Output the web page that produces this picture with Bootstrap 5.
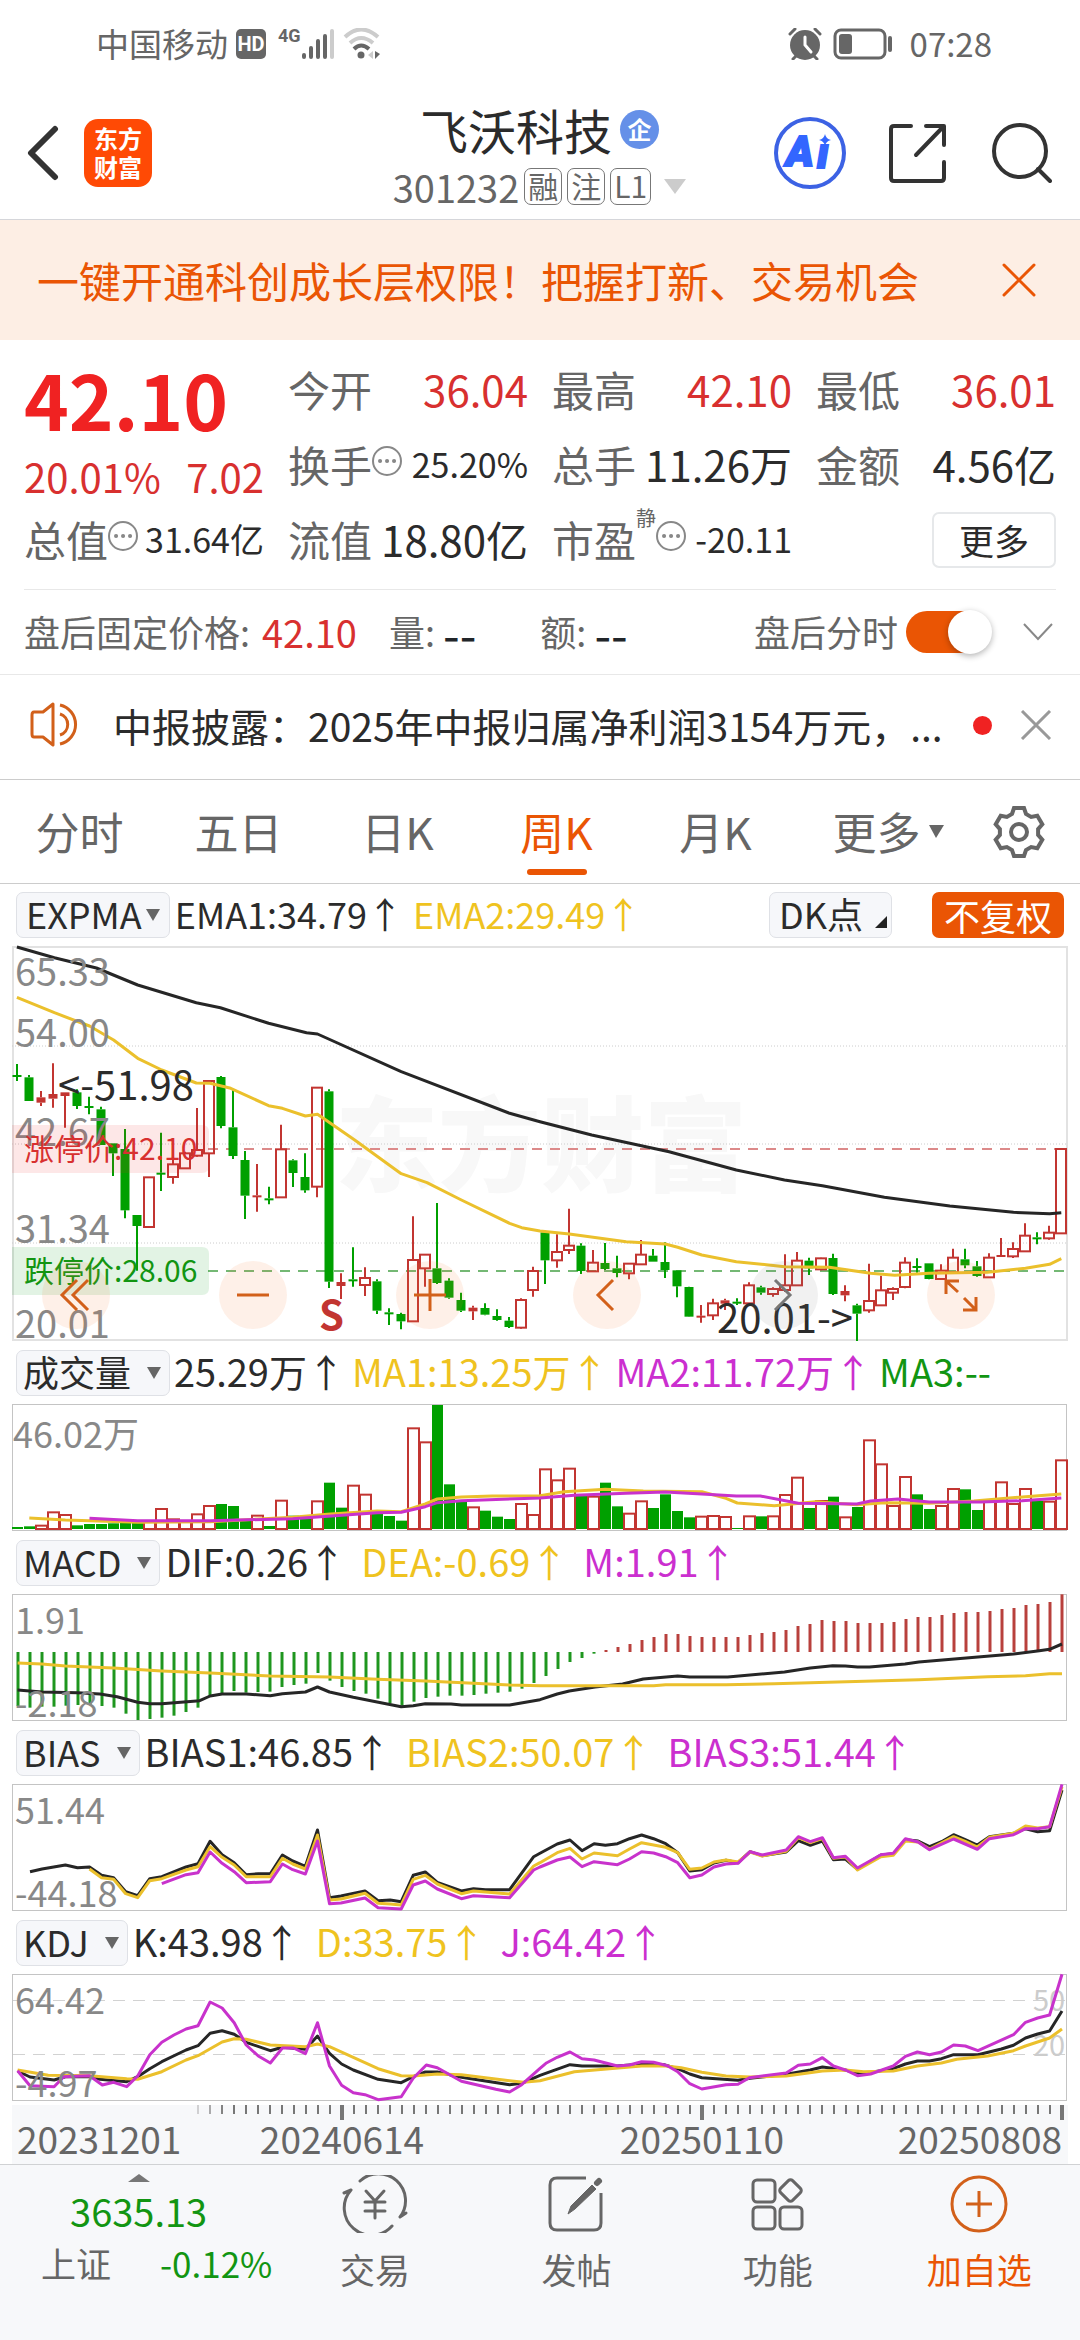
<!DOCTYPE html>
<html lang="zh-CN">
<head>
<meta charset="utf-8">
<meta name="viewport" content="width=device-width, initial-scale=1">
<title>飞沃科技 301232</title>
<link rel="stylesheet" href="https://cdn.jsdelivr.net/npm/bootstrap@5.3.0/dist/css/bootstrap.min.css">
<style>
:root{--ink:#2b2b2b;--soft:#666;--up:#d8302f;--down:#129512;--brand:#ea5504;--gold:#efc31f;--pink:#cb2fcf;--pane:#f7f8fa}
body{font-family:"Noto Sans CJK SC","Noto Sans",sans-serif;color:var(--ink);background:#fff;font-size:36px;line-height:1.3}
button{font-family:inherit;color:inherit;background:none;border:0;padding:0}
a{color:inherit;text-decoration:none}
svg{display:block;flex:none}
.c-soft{color:var(--soft)}.c-up{color:var(--up)}.c-down{color:var(--down)}.c-brand{color:var(--brand)}.c-gold{color:var(--gold)}.c-pink{color:var(--pink)}
.statusbar{height:87px;padding:0 88px 0 96px;font-size:33px;color:var(--soft)}
.hd-tag{width:30px;height:30px;border-radius:5px;background:#666;color:#fff;font:bold 20px/30px "Roboto",sans-serif;text-align:center}
.net-tag{font:bold 18px/16px "Roboto",sans-serif;align-self:flex-start}
.topbar{height:133px;border-bottom:1px solid #d5d6da;padding:0 28px 0 27px}
.topbar-side{flex:1 1 0}
.logo{width:68px;height:68px;border-radius:14px;background:#ff4a05;color:#fff;font-weight:700;font-size:24px;line-height:29px;margin-left:25px;padding-top:4px;text-align:center}
.stock-name{font-size:48px;line-height:56px;font-weight:400;margin:0}
.qi{width:39px;height:39px;border-radius:50%;background:#6590e8;color:#fff;font-weight:700;font-size:24px;line-height:37px;text-align:center}
.code-line{font-size:38px;line-height:37px;margin-top:11px;gap:5px}
.tagbox{border:1px solid #777;border-radius:7px;height:37px;font-size:30px;line-height:33px;padding:0 3px}
.share-btn{margin:0 45px 0 43px}
.notice{height:120px;background:#fdeee4;padding:0 40px 0 37px;font-size:42px}
.quote{padding:12px 24px;display:grid;grid-template-columns:repeat(4,1fr);column-gap:24px;grid-auto-rows:75px}
.price-cell{grid-row:span 2}
.last-price{font-size:76px;line-height:92px;font-weight:700;color:#f02222}
.change-line{font-size:40px;line-height:52px;padding-top:6px}
.stat{font-size:42px;white-space:nowrap}
.stat dt{font-weight:400;color:var(--soft)}
.stat dd{margin:0 0 0 auto}
.stat .sm-val{font-size:34px}
.static-mark{font-size:20px;line-height:24px;align-self:flex-start;color:var(--soft)}
.more-btn{border:2px solid #e6e8ea;border-radius:7px;width:124px;height:56px;font-size:35px;line-height:48px;margin-left:auto}
.after-row{height:86px;margin:0;padding:0 27px 0 24px;border-bottom:1px solid #e8e8e8;position:relative}
.after-row::before{content:"";position:absolute;left:24px;right:24px;top:0;border-top:1px solid #e8e8e8}
.after-row .v{font-size:38px}
.after-row .dash{font-size:48px;line-height:48px}
.switch{appearance:none;width:85px;height:42px;border-radius:21px;background:var(--brand);position:relative;margin:0;flex:none}
.switch::before{content:"";position:absolute;right:-1px;top:-1px;width:44px;height:44px;border-radius:50%;background:#fff;box-shadow:0 2px 6px rgba(0,0,0,.3)}
.news-row{height:105px;border-bottom:1px solid #ccc;padding:0 28px 4px 30px;font-size:39px}
.news-link{margin-left:33px;white-space:nowrap}
.red-dot{width:19px;height:19px;border-radius:50%;background:#f02222;flex:none}
.period{height:104px;border-bottom:1px solid #ccc;font-size:44px;color:var(--soft)}
.period>*{flex:159 1 0;position:relative;height:100%}
.period>.wide-tab{flex-grow:186}.period>.gear-tab{flex-grow:99}
.period .on{color:var(--brand)}
.period .on::after{content:"";position:absolute;left:50%;bottom:8px;width:60px;height:6px;border-radius:3px;margin-left:-30px;background:var(--brand)}
.legend{height:63px;padding:0 16px;font-size:38px;line-height:46px;white-space:nowrap}
.legend.first{height:62px;font-size:36px}
.pick{border:1px solid #dfe1e6;border-radius:7px;background:#f6f7fa;height:46px;padding:0 8px 4px 6px;font-size:36px;line-height:40px;display:flex;align-items:center;gap:16px;color:var(--ink)}
.pick svg{margin-top:4px}
.first .pick{gap:4px;padding:0 9px 4px 9px}
.vals{display:flex;gap:15px;padding:0 0 4px 5px}
.first .vals{gap:10px}
.vals.tight{gap:7px;padding-left:4px}
.adj{background:var(--brand);color:#fff;border-radius:7px;height:46px;width:132px;font-size:36px;line-height:42px;margin-left:40px}
.pane{margin:0 12px;position:relative}
.pane svg{width:100%;height:auto;overflow:visible}
.pane text{font-family:"Noto Sans CJK SC",sans-serif;font-size:36px;fill:#888}
.pane .t38{font-size:38px}
.pane .date{font-size:37px;fill:#666}
.zoombar{position:absolute;left:30px;right:73px;bottom:12px}
.round-btn{width:68px;height:68px;border-radius:50%;background:rgba(250,120,50,.11);display:flex;align-items:center;justify-content:center}
.round-btn.off{background:rgba(120,120,120,.1)}
.round-btn svg{width:34px;height:34px}
.bottombar{border-top:1px solid #d0d2d4;background:var(--pane);min-height:176px;color:var(--soft)}
.index-cell{flex:0 0 25.4%;padding:9px 2px 0 41px}
.index-cell .lvl{font-size:38px;line-height:41px;padding:0 36px 0 0}
.index-cell .sub{font-size:35px;line-height:48px}
.nav-cell{flex:1 1 0;padding-top:10px;font-size:35px;line-height:48px}
.nav-cell svg{margin-bottom:12px}
</style>
<script src="https://cdn.jsdelivr.net/npm/bootstrap@5.3.0/dist/js/bootstrap.bundle.min.js"></script>
</head>
<body>
<div class="statusbar d-flex align-items-center">
  <span>中国移动</span>
  <span class="hd-tag ms-2">HD</span>
  <div class="d-flex align-items-end" style="height:32px">
    <span class="net-tag ms-2 ps-1">4G</span>
    <svg width="34" height="32" viewBox="0 0 34 32" stroke="#666" stroke-width="4" stroke-linecap="round"><path d="M3 29v-2M10 29v-9M17 29v-16M24 29V8"/><path d="M31 29V3" stroke="#ccc"/></svg>
  </div>
  <svg class="ms-2" width="38" height="32" viewBox="0 0 38 32" fill="none" stroke-width="4"><path d="M2 9Q18-6 35 9M7 15Q18 5 30 15" stroke="#ccc"/><path d="M11 21Q18 14 26 21" stroke="#666"/><circle cx="18" cy="27" r="3.500" fill="#666"/><path d="M30 23v8l-5-4z" fill="#ccc"/><path d="M32 23l5 3-5 5z" fill="#666"/></svg>
  <svg class="ms-auto" width="34" height="32" viewBox="0 0 34 32"><circle cx="17" cy="17" r="15" fill="#666"/><path d="M2 6l5-5M32 6l-5-5M5 31l4-4M29 31l-4-4" stroke="#666" stroke-width="3" stroke-linecap="round"/><path d="M17 9v8l6 7" fill="none" stroke="#fff" stroke-width="3" stroke-linecap="round"/></svg>
  <svg class="ms-2 me-3" width="64" height="32" viewBox="0 0 64 32"><rect x="5" y="2" width="50" height="28" rx="6" fill="none" stroke="#666" stroke-width="3"/><rect x="9" y="6" width="13" height="20" rx="3" fill="#666"/><path d="M60 10v12" stroke="#666" stroke-width="4" stroke-linecap="round"/></svg>
  <span>07:28</span>
</div>

<header class="topbar d-flex align-items-center">
  <div class="topbar-side d-flex align-items-center">
    <button type="button" aria-label="返回"><svg width="32" height="56" viewBox="0 0 32 56" fill="none" stroke="#333" stroke-width="6" stroke-linecap="round" stroke-linejoin="round"><path d="M28 4L4 28l24 24"/></svg></button>
    <div class="logo">东方<br>财富</div>
  </div>
  <div>
    <div class="d-flex justify-content-center align-items-center gap-2"><h1 class="stock-name">飞沃科技</h1><span class="qi">企</span></div>
    <div class="code-line d-flex align-items-center c-soft"><span>301232</span><span class="tagbox">融</span><span class="tagbox">注</span><span class="tagbox">L1</span><svg class="ms-2" width="22" height="15" viewBox="0 0 22 15"><path d="M0 0h22L11 15z" fill="#ccc"/></svg></div>
  </div>
  <div class="topbar-side d-flex align-items-center justify-content-end">
    <button type="button" aria-label="Ai"><svg width="72" height="72" viewBox="0 0 72 72"><circle cx="36" cy="36" r="34" fill="none" stroke="#3c62e4" stroke-width="4"/><g fill="#3366ff" stroke="#3366ff" stroke-width="2" font-family="Roboto,sans-serif" font-weight="900" font-style="italic" font-size="42"><text x="12" y="49">A</text><text x="43" y="51">ı</text></g><path d="M51 17q1 5 6 6-5 1-6 6-1-5-6-6 5-1 6-6z" fill="#3366ff"/></svg></button>
    <button type="button" class="share-btn" aria-label="分享"><svg width="58" height="60" viewBox="0 0 58 60" fill="none" stroke="#333" stroke-width="4" stroke-linecap="round" stroke-linejoin="round"><path d="M22 3H5Q2 3 2 6V55Q2 58 5 58H52Q55 58 55 55V39M37 3H55V22M54 4L27 32"/></svg></button>
    <button type="button" aria-label="搜索"><svg width="60" height="60" viewBox="0 0 60 60" fill="none" stroke="#333" stroke-width="4" stroke-linecap="round"><circle cx="28" cy="28" r="26"/><path d="M46 46l12 12"/></svg></button>
  </div>
</header>

<div class="notice d-flex align-items-center justify-content-between c-brand">
  <a href="#">一键开通科创成长层权限！把握打新、交易机会</a>
  <button type="button" aria-label="关闭"><svg width="40" height="34" viewBox="0 0 40 34" stroke="#ea5504" stroke-width="3" stroke-linecap="round"><path d="M4 2l30 30M34 2L4 32"/></svg></button>
</div>

<dl class="quote m-0">
  <div class="price-cell"><div class="last-price">42.10</div><div class="change-line c-up d-flex justify-content-between"><span>20.01%</span><span>7.02</span></div></div>
  <div class="stat d-flex align-items-center"><dt>今开</dt><dd class="c-up">36.04</dd></div>
  <div class="stat d-flex align-items-center"><dt>最高</dt><dd class="c-up">42.10</dd></div>
  <div class="stat d-flex align-items-center"><dt>最低</dt><dd class="c-up">36.01</dd></div>
  <div class="stat d-flex align-items-center"><dt>换手</dt><svg width="30" height="40" viewBox="0 0 30 40"><use href="#dots"/></svg><dd class="sm-val">25.20%</dd></div>
  <div class="stat d-flex align-items-center"><dt>总手</dt><dd>11.26万</dd></div>
  <div class="stat d-flex align-items-center"><dt>金额</dt><dd>4.56亿</dd></div>
  <div class="stat d-flex align-items-center"><dt>总值</dt><svg width="30" height="40" viewBox="0 0 30 40"><g id="dots"><circle cx="15" cy="16" r="14" fill="none" stroke="#888" stroke-width="2"/><path d="M8 16h.1M15 16h.1M22 16h.1" stroke="#888" stroke-width="4" stroke-linecap="round"/></g></svg><dd class="sm-val">31.64亿</dd></div>
  <div class="stat d-flex align-items-center"><dt>流值</dt><dd>18.80亿</dd></div>
  <div class="stat d-flex align-items-center"><dt>市盈</dt><span class="static-mark pt-1">静</span><svg width="30" height="40" viewBox="0 0 30 40"><use href="#dots"/></svg><dd class="sm-val">-20.11</dd></div>
  <div class="d-flex align-items-center"><button type="button" class="more-btn">更多</button></div>
</dl>

<div class="after-row d-flex align-items-center c-soft">
  <span>盘后固定价格:</span><span class="v c-up ms-2 ps-1">42.10</span>
  <span class="ms-4 ps-2">量:&nbsp;</span><span class="dash text-dark">--</span>
  <span class="ms-5 ps-3">额:&nbsp;</span><span class="dash text-dark">--</span>
  <label for="after" class="ms-auto me-2">盘后分时</label><input class="switch" type="checkbox" id="after" checked>
  <button type="button" aria-label="展开" class="ms-4 ps-2"><svg width="30" height="18" viewBox="0 0 30 18" fill="none" stroke="#888" stroke-width="2"><path d="M1 1l14 15L29 1"/></svg></button>
</div>

<div class="news-row d-flex align-items-center">
  <svg width="50" height="46" viewBox="0 0 50 46" fill="none" stroke="#d2601a" stroke-width="3"><path d="M23 2L13 10H4Q2 10 2 13V32Q2 35 4 35H13L23 43z" stroke-linejoin="round"/><path d="M30 12a11 11 0 0 1 0 21M30 3a20 20 0 0 1 0 39"/></svg>
  <a href="#" class="news-link me-auto">中报披露：2025年中报归属净利润3154万元，...</a>
  <span class="red-dot"></span>
  <button type="button" aria-label="关闭" class="ms-4"><svg width="36" height="30" viewBox="0 0 36 30" stroke="#999" stroke-width="3"><path d="M6 1l28 28M34 1L6 29"/></svg></button>
</div>

<nav class="period d-flex align-items-center text-center">
  <button type="button">分时</button><button type="button">五日</button><button type="button">日K</button><button type="button" class="on">周K</button><button type="button">月K</button>
  <button type="button" class="wide-tab d-flex align-items-center justify-content-center">更多<svg class="ms-2" width="15" height="13" viewBox="0 0 15 13"><path d="M0 0h15L7 13z" fill="#666"/></svg></button>
  <button type="button" class="gear-tab" aria-label="设置"><svg class="ms-2 ps-1" width="56" height="54" viewBox="-26 -27 52 54" fill="none" stroke="#666" stroke-width="4"><path d="M-7-18L-5-24H5L7-18L12.100-15.100L18.300-16.300L23.300-7.700L19.100-2.900V2.900L23.300 7.700L18.300 16.300L12.100 15.100L7 18L5 24H-5L-7 18L-12.100 15.100L-18.300 16.300L-23.300 7.700L-19.100 2.900V-2.900L-23.300-7.700L-18.300-16.300L-12.100-15.100z"/><circle r="8"/></svg></button>
</nav>

<div class="legend first d-flex align-items-center">
  <button type="button" class="pick">EXPMA<svg width="14" height="12" viewBox="0 0 14 12"><path d="M0 0h14L7 12z" fill="#666"/></svg></button>
  <div class="vals"><span>EMA1:34.79↑</span><span class="c-gold">EMA2:29.49↑</span></div>
  <button type="button" class="pick ms-auto pe-1">DK点<svg class="ms-2" width="12" height="26" viewBox="0 0 12 26"><path d="M12 14v12H0z" fill="#222"/></svg></button>
  <button type="button" class="adj">不复权</button>
</div>
<div class="pane">
  <svg id="kline" viewBox="12 946 1056 395">
    <text x="335" y="1184" style="font-size:103px;font-weight:900;fill:#f8f8f8">东方财富</text>
    <rect x="13" y="947" width="1054" height="393" fill="none" stroke="#e2e2e2" stroke-width="2"/>
    <path d="M12 1046H1067M12 1144H1067M12 1243H1067" stroke="#ccc" stroke-dasharray="1 2"/>
    <path d="M208 1149H1060" stroke="#dc8a8a" stroke-width="2" stroke-dasharray="10 8"/>
    <path d="M208 1271H1066" stroke="#74b874" stroke-width="2" stroke-dasharray="10 8"/>
    <g class="plot"></g>
    <text class="t38" x="15" y="986">65.33</text><text class="t38" x="15" y="1047">54.00</text><text class="t38" x="15" y="1146">42.67</text><text class="t38" x="15" y="1243">31.34</text><text class="t38" x="15" y="1338">20.01</text>
    <path d="M12 1125H202q7 0 7 7v34q0 7-7 7H12z" fill="#f02020" fill-opacity=".11"/>
    <path d="M12 1247H202q7 0 7 7v34q0 7-7 7H12z" fill="#10a020" fill-opacity=".12"/>
    <text x="24" y="1160" style="font-size:30px;fill:#d8302f">涨停价:42.10</text>
    <text x="24" y="1282" style="font-size:30px;fill:#129512">跌停价:28.06</text>
    <text x="58" y="1100" style="font-size:40px;fill:#2b2b2b">&lt;-51.98</text>
    <text x="717" y="1333" style="font-size:40px;fill:#2b2b2b">20.01-&gt;</text>
    <text x="319" y="1330" style="font-size:40px;font-weight:700;fill:#c23531">S</text>
  </svg>
  <div class="zoombar d-flex justify-content-between">
    <button type="button" class="round-btn" aria-label="最左"><svg viewBox="0 0 34 34" fill="none" stroke="#d2601a" stroke-width="3"><path d="M18 2L3 17l15 15M29 2L14 17l15 15"/></svg></button>
    <button type="button" class="round-btn" aria-label="缩小"><svg viewBox="0 0 34 34" stroke="#d2601a" stroke-width="3"><path d="M1 17h32"/></svg></button>
    <button type="button" class="round-btn" aria-label="放大"><svg viewBox="0 0 34 34" stroke="#d2601a" stroke-width="3"><path d="M1 17h32M17 1v32"/></svg></button>
    <button type="button" class="round-btn" aria-label="左移"><svg viewBox="0 0 34 34" fill="none" stroke="#d2601a" stroke-width="3"><path d="M23 2L8 17l15 15"/></svg></button>
    <button type="button" class="round-btn off" aria-label="右移"><svg viewBox="0 0 34 34" fill="none" stroke="#777" stroke-width="3"><path d="M8 2l15 15L8 32"/></svg></button>
    <button type="button" class="round-btn" aria-label="全屏"><svg viewBox="0 0 34 34" fill="none" stroke="#d2601a" stroke-width="3"><path d="M2 16V3H15M2 3L14 14M32 19V32H19M32 32L20 20"/></svg></button>
  </div>
</div>

<div class="legend d-flex align-items-center">
  <button type="button" class="pick">成交量<svg width="14" height="12" viewBox="0 0 14 12"><path d="M0 0h14L7 12z" fill="#666"/></svg></button>
  <div class="vals tight"><span>25.29万↑</span><span class="c-gold">MA1:13.25万↑</span><span class="c-pink">MA2:11.72万↑</span><span class="c-down">MA3:--</span></div>
</div>
<div class="pane"><svg id="vol" viewBox="12 1404 1056 127"><rect x="12.500" y="1404.500" width="1054" height="126" fill="none" stroke="#c4c4c4"/><g class="plot"></g><text x="13" y="1448">46.02万</text></svg></div>

<div class="legend d-flex align-items-center">
  <button type="button" class="pick">MACD<svg width="14" height="12" viewBox="0 0 14 12"><path d="M0 0h14L7 12z" fill="#666"/></svg></button>
  <div class="vals"><span>DIF:0.26↑</span><span class="c-gold">DEA:-0.69↑</span><span class="c-pink">M:1.91↑</span></div>
</div>
<div class="pane"><svg id="macd" viewBox="12 1594 1056 127"><rect x="12.500" y="1594.500" width="1054" height="126" fill="none" stroke="#c4c4c4"/><g class="plot"></g><text x="15" y="1634">1.91</text><text x="15" y="1717">-2.18</text></svg></div>

<div class="legend d-flex align-items-center">
  <button type="button" class="pick">BIAS<svg width="14" height="12" viewBox="0 0 14 12"><path d="M0 0h14L7 12z" fill="#666"/></svg></button>
  <div class="vals"><span>BIAS1:46.85↑</span><span class="c-gold">BIAS2:50.07↑</span><span class="c-pink">BIAS3:51.44↑</span></div>
</div>
<div class="pane"><svg id="bias" viewBox="12 1784 1056 127"><rect x="12.500" y="1784.500" width="1054" height="126" fill="none" stroke="#c4c4c4"/><g class="plot"></g><text x="15" y="1824">51.44</text><text x="15" y="1907">-44.18</text></svg></div>

<div class="legend d-flex align-items-center">
  <button type="button" class="pick">KDJ<svg width="14" height="12" viewBox="0 0 14 12"><path d="M0 0h14L7 12z" fill="#666"/></svg></button>
  <div class="vals"><span>K:43.98↑</span><span class="c-gold">D:33.75↑</span><span class="c-pink">J:64.42↑</span></div>
</div>
<div class="pane"><svg id="kdj" viewBox="12 1974 1056 127"><rect x="12.500" y="1974.500" width="1054" height="126" fill="none" stroke="#c4c4c4"/><path d="M13 2000.500H1066M13 2054.500H1066" stroke="#d2d2d2" stroke-dasharray="12 8"/><text x="1033" y="2011" style="font-size:29px;fill:#ccc">50</text><text x="1033" y="2056" style="font-size:29px;fill:#ccc">20</text><g class="plot"></g><text x="15" y="2014">64.42</text><text x="15" y="2097">-4.97</text></svg></div>
<div class="pane pt-1"><svg id="axis" viewBox="12 2105 1056 59"><rect x="12" y="2105" width="1056" height="59" fill="#f7f8fa"/><g class="plot"></g>
  <text class="date" x="17" y="2154">20231201</text><text class="date" x="342" y="2154" text-anchor="middle">20240614</text><text class="date" x="702" y="2154" text-anchor="middle">20250110</text><text class="date" x="1062" y="2154" text-anchor="end">20250808</text></svg></div>

<footer class="bottombar d-flex">
  <a href="#" class="index-cell c-down">
    <div class="lvl text-center"><svg class="mx-auto mb-2" width="22" height="8" viewBox="0 0 22 8"><path d="M0 8L11 0l11 8z" fill="#777"/></svg>3635.13</div>
    <div class="sub d-flex justify-content-between pt-2"><span class="c-soft">上证</span><span>-0.12%</span></div>
  </a>
  <a href="#" class="nav-cell d-flex flex-column align-items-center"><svg width="66" height="58" viewBox="0 0 66 58" fill="none" stroke="#666" stroke-width="3" stroke-linecap="round" stroke-linejoin="round"><path d="M18 6A27 27 0 0 1 58 42L64 38M50 51A27 27 0 0 1 9 15L2 18"/><path d="M24 16l9 10 9-10M33 26v17M23 27h20M23 36h20"/></svg>交易</a>
  <a href="#" class="nav-cell d-flex flex-column align-items-center"><svg width="56" height="58" viewBox="0 0 56 58" fill="none" stroke="#666" stroke-width="3"><path d="M38 3H9Q2 3 2 10V48Q2 55 9 55H46Q53 55 53 48V18"/><path d="M20 39L23 31 44 10 48 14 27 34z" fill="#666" stroke-width="1"/><path d="M49 8l2-2" stroke-width="6" stroke-linecap="round"/></svg>发帖</a>
  <a href="#" class="nav-cell d-flex flex-column align-items-center"><svg width="54" height="58" viewBox="0 0 54 58" fill="none" stroke="#666" stroke-width="3"><rect x="2" y="5" width="22" height="22" rx="4"/><rect x="2" y="32" width="22" height="22" rx="4"/><rect x="29" y="32" width="22" height="22" rx="4"/><rect x="31" y="7" width="17" height="17" rx="3" transform="rotate(45 39.500 15.500)"/></svg>功能</a>
  <a href="#" class="nav-cell d-flex flex-column align-items-center c-brand"><svg width="58" height="58" viewBox="0 0 58 58" fill="none" stroke="#d2601a" stroke-width="3"><circle cx="29" cy="29" r="27"/><path d="M16 29h26M29 16v26"/></svg>加自选</a>
</footer>

<script>
const RED='#c23531', GREEN='#00a000', INK='#262626', GOLD='#ebc02c', PINK='#c832cc';
const NS='http://www.w3.org/2000/svg';
const plot=id=>document.querySelector('#'+id+' .plot');
function add(g,tag,attrs){const e=document.createElementNS(NS,tag);for(const k in attrs)e.setAttribute(k,attrs[k]);g.appendChild(e);}
// Levels are stored in thirds of a unit below each pane's base line; abscissae on the plot grid of 2.904 steps per unit.
const GX=2.904;
function curve(id,base,color,left,right){
  const pts=[];
  for(let i=0;i<left.length;i+=2)pts.push((left[i]/GX).toFixed(1)+','+(base+left[i+1]/3).toFixed(1));
  for(let i=0;i<right.length;i+=2)pts.push((540+right[i]/GX).toFixed(1)+','+(base+right[i+1]/3).toFixed(1));
  add(plot(id),'polyline',{points:pts.join(' '),fill:'none',stroke:color,'stroke-width':3,'stroke-linejoin':'round'});
}
// colour (g/r hollow/f filled red), high, body top, body bottom, low
const K=`g-48,-15,-11,3 g-15,-8,63,63 f33,52,68,78 f-50,42,56,83 f37,37,48,143 g28,37,78,87 g50,78,82,103 g80,88,195,195 g190,190,220,288 g147,207,391,415 g405,405,438,572 r292,292,441,441 g158,278,282,333 r205,253,291,311 r215,220,265,265 r84,210,227,230 r3,3,220,291 g-12,-9,138,145 g30,142,228,237 g213,240,347,417 f252,346,350,395 g320,355,359,373 r134,208,352,352 g238,241,279,321 g220,291,331,338 r23,23,320,352 g28,34,605,624 f580,606,618,657 g502,598,602,620 r562,594,615,648 g598,604,692,702 g685,697,700,735 g698,702,724,748 r409,540,724,724 r524,524,565,620 g369,565,609,612 g595,602,653,656 g638,660,692,696 f677,683,694,720 g670,684,704,706 g688,708,720,722 g711,722,741,744 r655,660,743,746 r560,573,630,650 g452,457,541,612 r463,516,541,563 r386,497,510,522 g490,497,573,582 r510,548,574,574 g489,549,567,570 g527,565,579,592 r550,551,580,598 r480,524,553,553 g507,527,545,545 g487,546,570,594 g571,571,619,652 g620,621,710,711 f675,707,711,728 r656,670,706,720 f656,661,671,690 g655,665,670,675 r607,616,670,670 g617,622,638,644 r622,627,642,650 r523,616,630,636 r516,542,616,618 g533,542,565,585 r533,535,568,571 g521,534,642,645 f616,633,646,664 g671,676,701,783 r551,663,691,698 r587,631,676,678 r622,627,638,660 r532,548,621,625 g535,558,562,578 g550,550,597,598 r553,572,597,600 r506,533,577,578 g506,538,556,565 g543,559,588,590 r520,533,592,594 f474,525,529,530 r487,507,529,534 r430,467,514,516 g457,472,476,493 r437,458,475,479 r205,207,460,462`.split(' ');
K.forEach((s,i)=>{
  const t=s[0],[h,a,b,l]=s.slice(1).split(',').map(v=>1080+v/3),x=17+12*i,c=t=='g'?GREEN:RED,g=plot('kline');
  add(g,'path',{d:`M${x} ${h}V${a}M${x} ${b}V${l}`,stroke:c,'stroke-width':2});
  if(t=='r')add(g,'rect',{x:x-5,y:a,width:10,height:Math.max(2,b-a),fill:'none',stroke:c,'stroke-width':2});
  else add(g,'rect',{x:x-4.5,y:a,width:9,height:Math.max(2,b-a),fill:c});
});
curve('kline',780,INK,[49,501,158,533,280,564,400,615,570,668,640,683,780,730,890,758,922,762,1165,875,1480,1000],[0,1025,150,1065,375,1115,570,1170,710,1200,820,1217,1000,1252,1190,1278,1375,1297,1480,1301,1514,1298]);
curve('kline',780,GOLD,[49,652,158,698,260,738,330,780,400,835,470,870,570,909,610,910,670,925,780,977,820,985,887,1008,922,1003,1030,1080,1165,1181,1240,1208,1340,1260,1480,1330,1515,1343],[0,1353,85,1362,250,1385,364,1392,400,1402,470,1425,570,1445,710,1460,840,1462,960,1480,1030,1486,1130,1480,1300,1477,1410,1465,1480,1453,1514,1436]);

`g1341 g1339 r1337 r1297 r1305 g1336 g1332 g1332 g1330 g1328 g1328 r1325 r1287 r1318 r1326 r1303 r1278 g1272 g1278 g1322 r1307 g1338 r1262 g1307 g1307 r1264 g1208 g1283 r1217 r1244 g1292 g1308 g1322 r1045 r1087 g975 g1213 g1262 r1282 g1292 g1310 g1317 r1272 r1305 r1168 r1201 r1166 g1243 r1250 g1208 g1279 r1301 r1264 g1284 g1243 g1293 g1312 r1310 r1308 r1311 g1344 r1309 g1309 r1309 r1245 r1193 g1284 r1263 g1250 r1312 g1281 r1081 r1153 r1278 r1191 g1243 g1287 r1278 r1227 g1228 g1290 r1262 r1207 r1272 r1227 g1262 r1265 r1141`.split(' ').forEach((s,i)=>{
  const x=17+12*i,y=1080+s.slice(1)/3,g=plot('vol');
  if(s[0]=='g')add(g,'rect',{x:x-5,y:y,width:11,height:1529-y,fill:GREEN});
  else add(g,'rect',{x:x-5,y:y,width:11,height:1529-y,fill:'#fff',stroke:RED,'stroke-width':2});
});
curve('vol',1080,GOLD,[85,1314,190,1320,400,1327,610,1325,850,1312,950,1303,1095,1293,1165,1295,1235,1272,1270,1257,1340,1251,1430,1248],[0,1247,70,1235,190,1228,300,1233,470,1235,540,1255,573,1269,680,1277,800,1265,920,1274,1000,1268,1130,1270,1260,1263,1410,1250,1514,1242]);
curve('vol',1080,PINK,[260,1315,400,1322,610,1322,850,1316,1095,1298,1165,1297,1235,1280,1270,1268,1340,1262],[0,1254,100,1246,250,1240,364,1236,470,1242,570,1248,640,1248,750,1270,920,1272,960,1263,1040,1257,1130,1266,1280,1266,1400,1262,1514,1254]);

[498,503,500,500,497,495,495,498,503,521,540,537,533,527,516,503,468,459,453,458,456,455,441,435,431,399,422,441,453,461,476,490,497,485,474,470,467,467,465,461,458,455,446,429,408,387,366,354,341,330,321,312,300,291,282,282,288,291,291,291,291,285,279,276,270,258,252,240,243,243,249,249,249,246,237,231,231,225,219,216,216,213,207,204,195,192,186,163].forEach((v,i)=>
  add(plot('macd'),'path',{d:`M${18+12*i} 1652V${1540+v/3}`,stroke:v>336?'#1e961e':'#b8403c','stroke-width':3}));
curve('macd',1540,INK,[51,450,122,456,225,458,290,462,340,470,400,487,435,491,470,491,580,482,610,468,645,462,715,462,785,467,820,461,887,456,922,441,957,456,1026,472,1095,486,1165,500,1200,497,1235,491,1310,492,1340,495,1480,495],[0,479,50,462,85,453,160,441,240,432,300,417,400,408,435,411,545,411,710,396,785,384,850,377,887,378,922,381,957,381,1060,372,1100,366,1375,342,1450,332,1480,328,1516,312]);
curve('macd',1540,GOLD,[51,369,122,372,190,378,330,384,470,393,610,399,785,408,957,411,1095,418,1235,423,1375,430,1480,435],[0,437,330,437,365,434,540,434,680,431,890,425,1100,419,1300,410,1410,407,1480,401,1516,401]);

curve('bias',1540,INK,[87,995,122,987,190,975,225,983,260,981,295,1006,330,1013,365,1055,400,1067,435,1016,470,1010,540,981,575,971,610,904,645,944,680,968,715,1004,750,1001,785,1001,820,945,850,963,887,979,922,870,957,1073,990,1068,1060,1053,1098,1082,1133,1080,1165,1085,1200,1006,1235,996,1270,1027,1340,1053,1375,1046,1410,1049,1480,1049,1550,950],[0,940,50,912,87,900,122,932,157,911,190,916,225,911,260,896,295,885,330,896,365,911,400,938,435,993,470,989,505,969,540,961,575,968,610,935,645,947,715,936,750,902,785,916,820,903,852,959,887,957,922,988,990,945,1026,941,1061,899,1098,903,1131,920,1166,905,1201,884,1235,899,1270,915,1305,890,1375,880,1410,866,1445,875,1480,872,1516,750]);
curve('bias',1540,GOLD,[260,987,295,1013,330,1018,365,1061,400,1073,435,1022,470,1016,540,990,575,980,610,920,645,952,680,975,715,1010,785,1010,820,955,850,972,887,987,922,885,957,1080,990,1077,1060,1060,1098,1090,1133,1092,1165,1095,1200,1018,1235,1006,1270,1032,1340,1061,1375,1053,1480,1062,1550,978],[0,968,50,938,87,925,122,957,157,939,225,947,260,927,295,908,365,922,400,938,435,988,470,984,505,966,540,960,575,966,610,936,645,948,715,934,750,893,785,908,820,896,852,955,887,951,922,990,990,950,1026,946,1061,903,1098,906,1131,927,1201,890,1235,904,1270,921,1305,892,1375,880,1410,858,1445,864,1480,860,1516,740]);
curve('bias',1540,PINK,[470,1031,540,1004,575,998,610,936,645,970,680,995,715,1028,785,1025,820,972,850,989,887,1002,922,903,957,1091,990,1089,1060,1074,1098,1103,1165,1107,1200,1035,1235,1023,1270,1047,1340,1076,1375,1067,1480,1073,1550,990],[0,981,50,960,87,951,122,980,157,965,225,974,260,957,295,935,330,939,365,950,400,968,435,1013,470,1005,505,981,540,972,575,970,610,935,645,945,715,930,750,890,785,905,820,893,852,953,887,949,922,984,990,944,1026,940,1061,896,1098,906,1131,929,1201,897,1270,928,1305,896,1375,884,1410,866,1445,866,1480,860,1516,733]);

curve('kdj',1920,INK,[51,453,87,471,157,480,190,470,260,470,290,478,368,485,400,470,435,446,470,425,540,390,575,377,610,340,645,332,680,343,715,367,785,392,820,382,887,388,922,348,957,400,992,432,1026,450,1098,478,1165,488,1200,470,1235,456,1270,456,1340,472,1480,494,1515,490],[0,466,87,434,122,438,225,438,295,432,360,434,400,446,435,462,470,473,575,481,610,475,715,463,785,450,820,441,887,450,930,462,1026,446,1061,432,1096,423,1131,423,1166,416,1201,404,1272,404,1340,387,1375,376,1410,354,1445,342,1480,333,1516,273]);
curve('kdj',1920,GOLD,[51,450,140,466,260,467,368,476,400,478,470,455,540,420,575,407,645,366,680,356,715,358,785,375,887,380,922,372,957,380,1026,412,1098,446,1165,467,1200,468,1270,462,1340,464,1480,482,1520,487],[0,482,100,455,295,438,360,437,410,443,470,457,540,468,610,471,715,468,820,453,887,450,940,455,1026,453,1096,438,1166,429,1210,418,1300,408,1375,392,1410,378,1480,354,1516,327]);
curve('kdj',1920,PINK,[51,452,87,497,157,500,185,470,260,467,297,495,330,487,368,500,400,468,435,404,470,367,505,345,540,327,575,317,610,246,645,264,680,308,715,375,750,408,785,429,820,384,852,384,887,401,922,308,957,438,992,496,1026,518,1060,524,1098,539,1165,530,1200,475,1238,435,1270,443,1340,484,1440,508,1480,516,1515,494],[0,445,17,430,50,412,87,396,122,416,157,420,225,438,260,435,295,425,330,427,370,437,400,455,435,491,470,507,540,494,575,493,608,473,715,459,750,436,785,432,820,413,852,438,887,450,922,467,960,462,1026,438,1061,409,1096,396,1131,404,1166,396,1201,375,1235,378,1272,392,1375,344,1410,307,1445,294,1480,285,1516,163]);

for(let i=15;i<88;i++){
  const major=i%30==27;
  add(plot('axis'),'path',{d:`M${18+12*i} 2105V${major?2120:2114}`,stroke:'#777','stroke-width':major?4:2,opacity:Math.min(1,(i-14)*.3)});
}
</script>
</body>
</html>
